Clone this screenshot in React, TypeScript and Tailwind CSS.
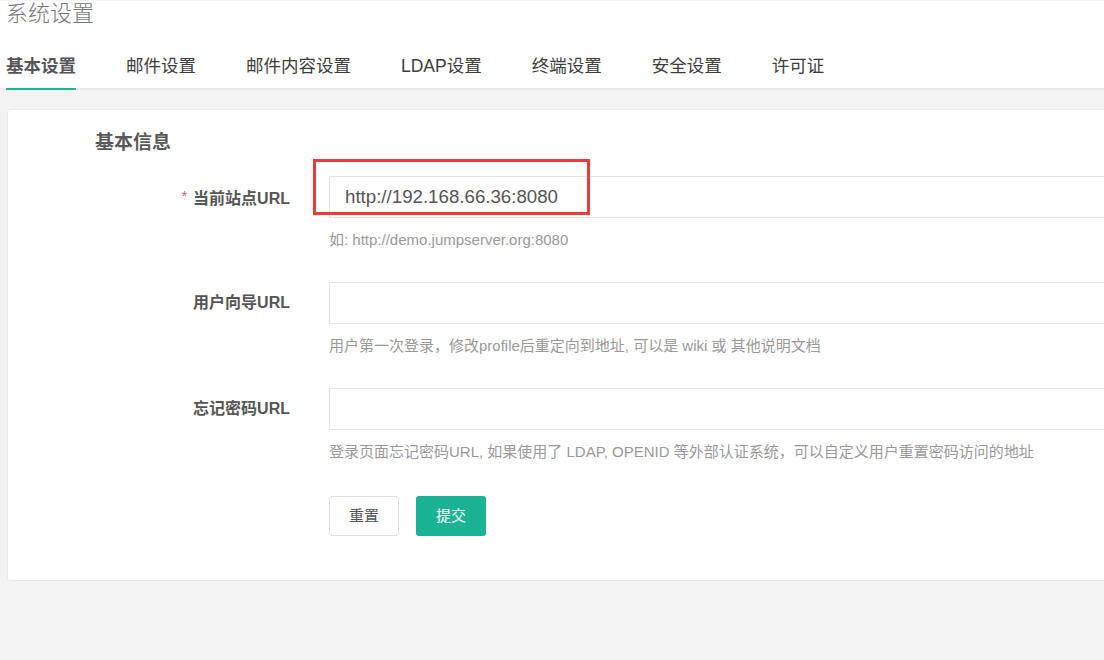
import React from "react";

const FONT = { fontFamily: '"Liberation Sans", "Noto Sans CJK SC", sans-serif' };

const TABS = ["基本设置", "邮件设置", "邮件内容设置", "LDAP设置", "终端设置", "安全设置", "许可证"];

interface FieldProps {
  label: string;
  required?: boolean;
  value?: string;
  help: string;
  highlight?: boolean;
}

function Field({ label, required, value, help, highlight }: FieldProps) {
  return (
    <div className="mb-[32px]">
      <div className="flex items-center">
        <label className="w-[282px] shrink-0 text-right text-[16px] font-bold leading-[22px] text-[#555]">
          {required && (
            <span className="mr-[6px] align-[3px] text-[14px] font-normal text-[#ed5565]">*</span>
          )}
          {label}
        </label>
        <div className="relative ml-[39px] flex-1">
          <div className="flex h-[42px] items-center border border-[#e5e6e7] bg-white pl-[15px] text-[18.7px] text-[#555]">
            {value}
          </div>
          {highlight && (
            <div className="pointer-events-none absolute left-[-16px] top-[-17px] h-[56px] w-[277px] border-[3px] border-[#ef3a3a]" />
          )}
        </div>
      </div>
      <p className="ml-[321px] mt-[12px] text-[15px] leading-[20px] text-[#999]">{help}</p>
    </div>
  );
}

export default function App() {
  return (
    <div className="h-[660px] w-[1104px] overflow-hidden bg-[#f3f3f4]" style={FONT}>
      <div className="w-[1300px] bg-white px-[6px]">
        <h1 className="mt-[1px] h-[26px] text-[22px] font-light leading-[26px] text-[#777]">系统设置</h1>
        <nav className="-mx-[6px] mt-[28px] flex gap-[50px] border-b-2 border-[#e7eaec] px-[6px]">
          {TABS.map((t, i) => (
            <div
              key={t}
              className={`-mb-[2px] pb-[11px] text-[17.5px] leading-[22px] ${
                i === 0
                  ? "border-b-2 border-[#1ab394] font-bold text-[#555]"
                  : "border-b-2 border-transparent text-[#3d3d3d]"
              }`}
            >
              {t}
            </div>
          ))}
        </nav>
      </div>

      <div className="w-[1300px] pl-[7px] pt-[19px]">
        <div className="rounded-[3px] border border-[#e7eaec] bg-white pb-[44px] pt-[21px]">
          <h3 className="ml-[87px] text-[19px] font-bold leading-[24px] text-[#595959]">基本信息</h3>
          <div className="mt-[21px]">
            <Field
              label="当前站点URL"
              required
              value="http://192.168.66.36:8080"
              help="如: http://demo.jumpserver.org:8080"
              highlight
            />
            <Field label="用户向导URL" help="用户第一次登录，修改profile后重定向到地址, 可以是 wiki 或 其他说明文档" />
            <Field
              label="忘记密码URL"
              help="登录页面忘记密码URL, 如果使用了 LDAP, OPENID 等外部认证系统，可以自定义用户重置密码访问的地址"
            />
          </div>
          <div className="ml-[321px] flex gap-[17px] pt-[2px]">
            <button className="h-[40px] w-[70px] rounded-[3px] border border-[#dcdfe6] bg-white text-[15px] text-[#555]">
              重置
            </button>
            <button className="h-[40px] w-[70px] rounded-[3px] bg-[#1ab394] text-[15px] text-white">提交</button>
          </div>
        </div>
      </div>
    </div>
  );
}
